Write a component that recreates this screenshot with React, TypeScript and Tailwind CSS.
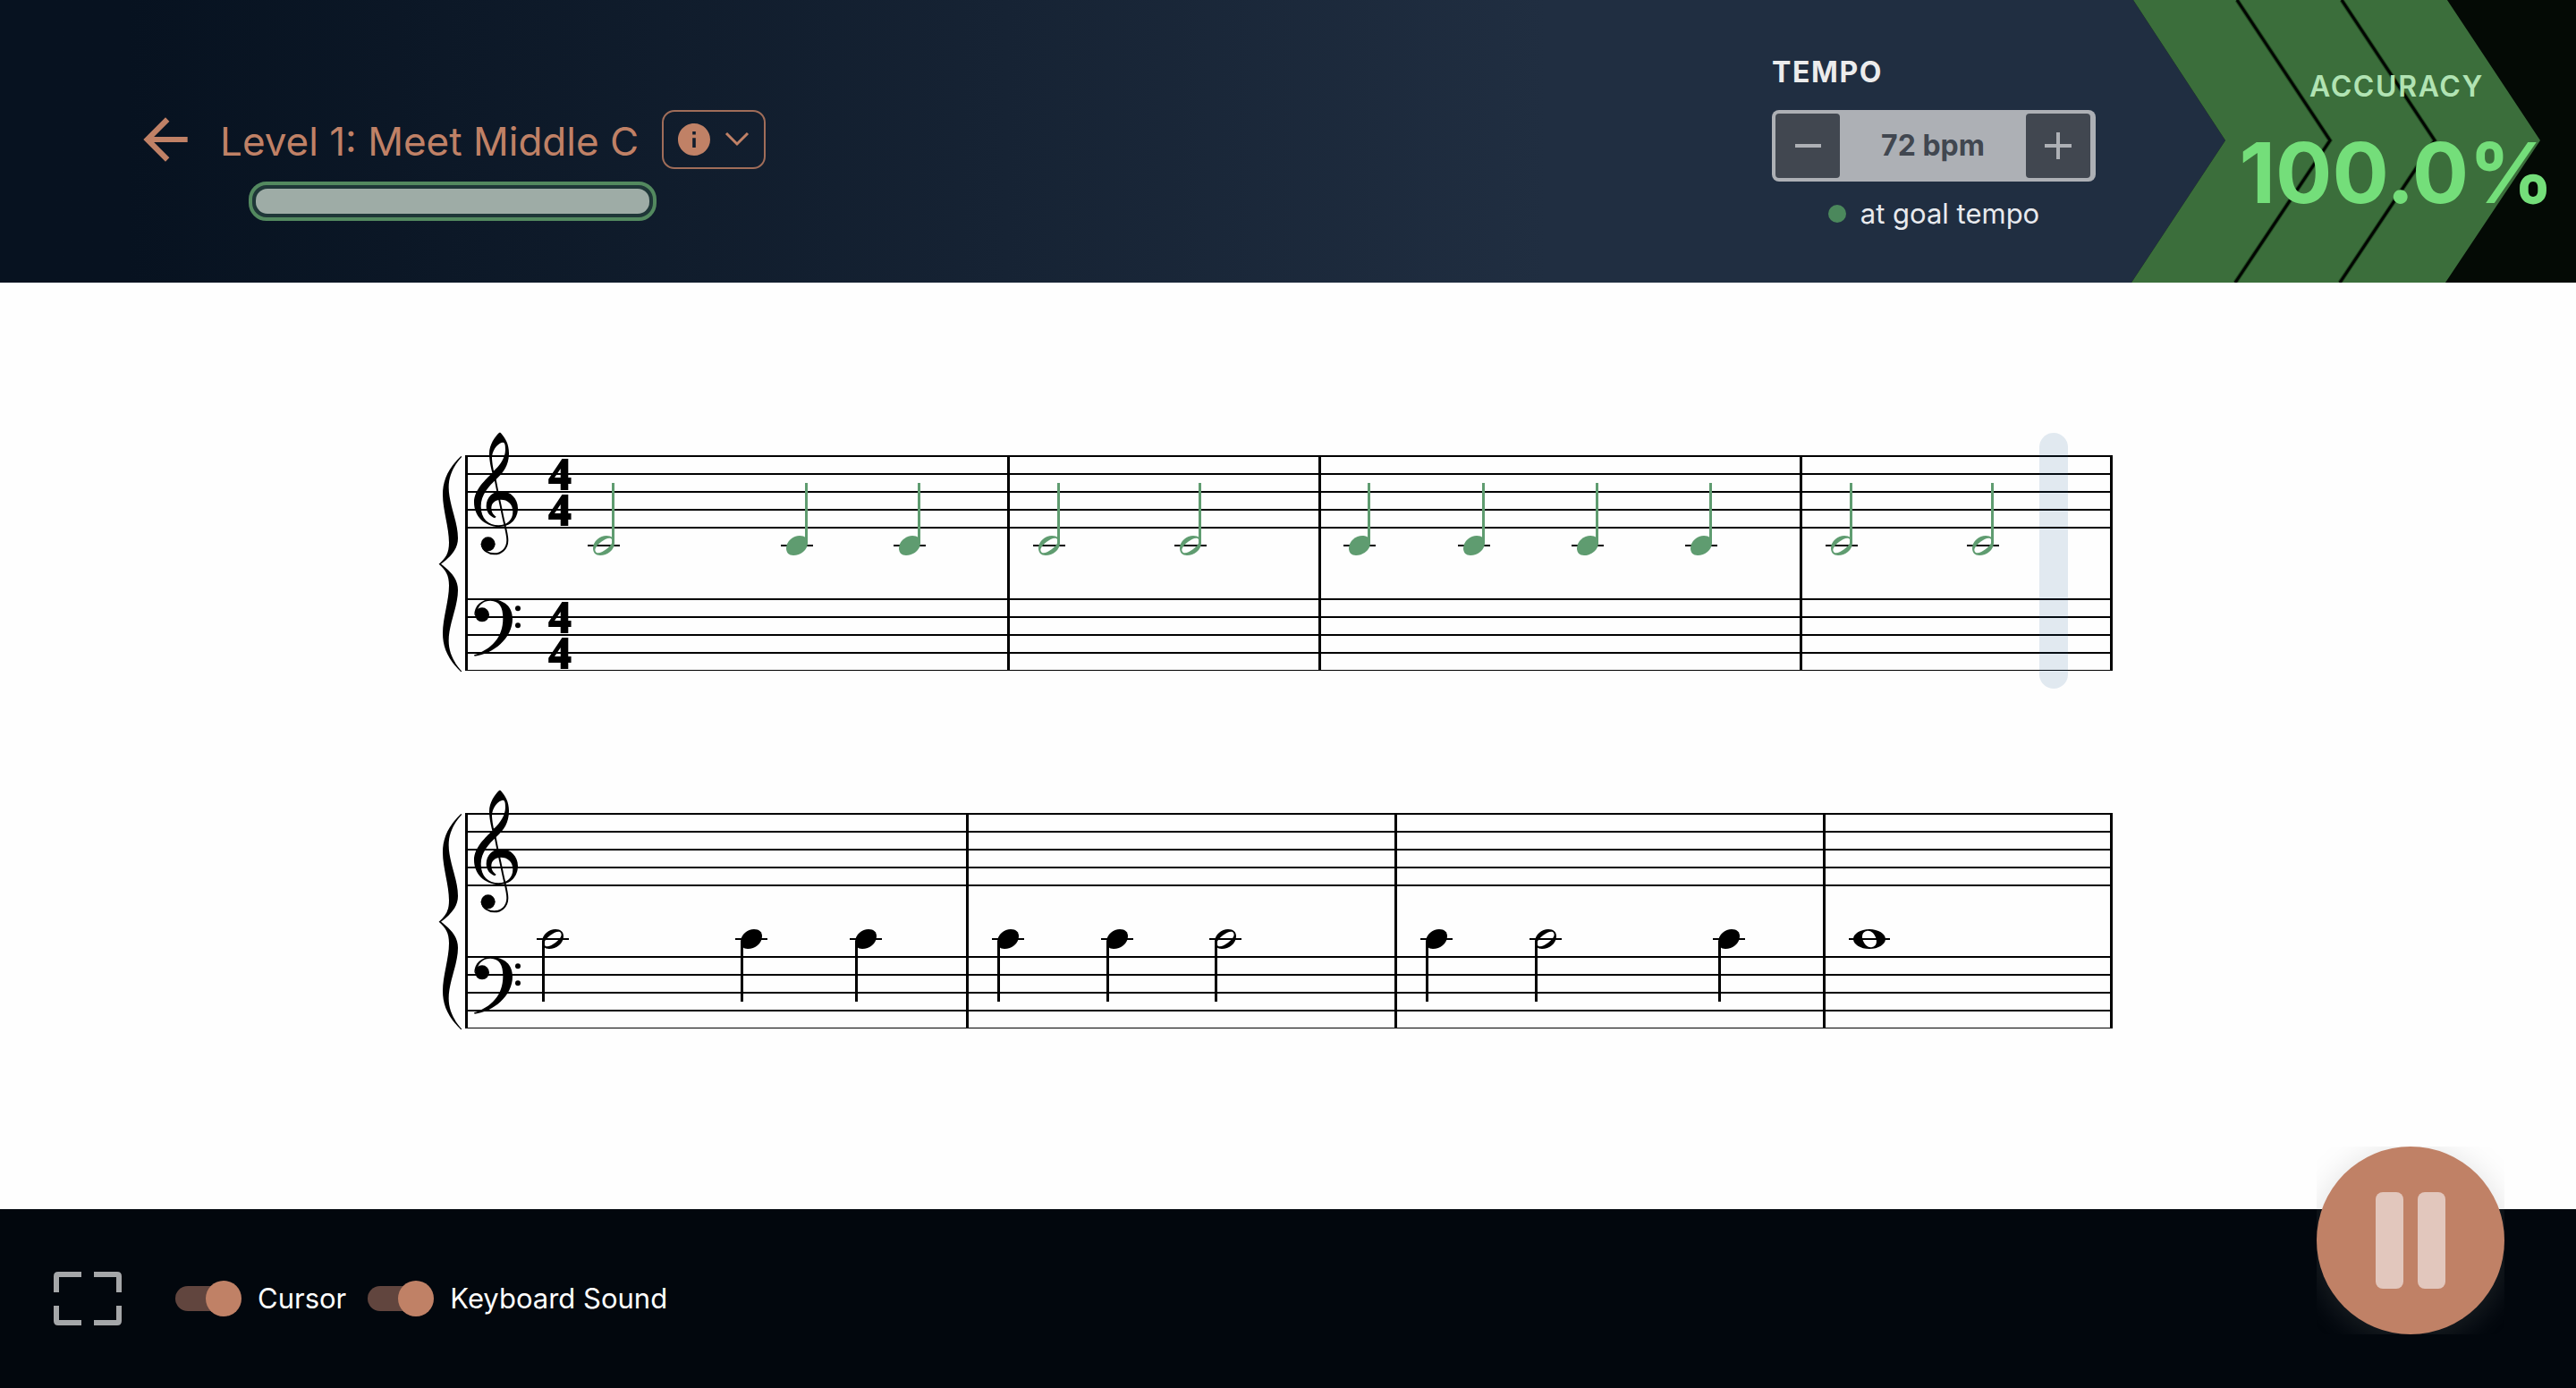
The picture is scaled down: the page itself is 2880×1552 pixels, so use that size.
import React, { useState } from "react";

type Note = { x: number; kind: "whole" | "half" | "quarter" };

type SystemProps = {
  label: string;
  bars: number[];
  notes: Note[];
  noteY: number;
  stem: "up" | "down";
  noteClass: string;
  time?: boolean;
};

const LINES = [40, 60, 80, 100, 120, 200, 220, 240, 260, 280];

function NoteHead({ kind }: { kind: Note["kind"] }) {
  if (kind === "whole") {
    return (
      <path
        fillRule="evenodd"
        d="M0 -11C10 -11 18 -6 18 0S10 11 0 11S-18 6 -18 0S-10 -11 0 -11ZM-3 -9C-8 -8 -9 -3 -7 2C-5 7 -1 10 3 9C8 8 9 3 7 -2C5 -7 1 -10 -3 -9Z"
      />
    );
  }
  if (kind === "half") {
    return (
      <path
        fillRule="evenodd"
        d="M3 -11C9 -11 12 -8 12 -3C12 5 4 11 -4 11C-9 11 -12 8 -12 3C-12 -5 -4 -11 3 -11ZM9 -7C7 -10 1 -7 -3 -4C-8 0 -11 4 -9 7C-7 10 -1 7 3 4C8 0 11 -4 9 -7Z"
      />
    );
  }
  return <path d="M3 -11C9 -11 12 -8 12 -3C12 5 4 11 -4 11C-9 11 -12 8 -12 3C-12 -5 -4 -11 3 -11Z" />;
}

function Brace() {
  const half =
    "M106 150C60 195 45 235 45 280C45 330 66 390 66 440C66 475 55 492 32 512L37 514C75 485 96 460 96 425C96 370 65 310 65 255C65 215 82 182 109 152Z";
  return (
    <g>
      <path d={half} />
      <path d={half} transform="translate(0 1024) scale(1 -1)" />
    </g>
  );
}

function TrebleClef() {
  return (
    <g>
      <path
        fillRule="evenodd"
        d="M233 73C220 86 201 112 201 142C201 165 207 190 211 206C190 228 150 262 150 305C150 350 184 386 234 387C272 388 297 360 297 325C297 292 272 268 241 268C212 268 191 290 191 318C191 338 203 352 220 358L224 353C212 345 208 335 208 324C208 308 221 296 240 296C262 296 280 310 280 336C280 365 260 382 232 382C198 382 173 360 173 318C173 280 200 250 224 228C250 204 267 180 267 140C267 110 255 90 240 73C238 71 235 71 233 73ZM247 104C232 104 209 130 210 158C211 172 213 185 216 200C238 180 255 155 255 128C255 115 254 104 247 104Z"
      />
      <path
        d="M216 200C226 260 238 310 246 350C252 380 262 410 262 432C262 462 240 478 218 478C198 478 178 466 176 446"
        fill="none"
        stroke="currentColor"
        strokeWidth="6"
      />
      <circle cx="197" cy="445" r="24" />
    </g>
  );
}

function BassClef() {
  return (
    <g>
      <path d="M151 684C150 652 175 630 208 630C252 632 279 655 279 696C279 760 215 814 152 821L150 817C208 798 247 758 247 695C247 655 235 636 205 635C182 635 165 650 163 666Z" />
      <circle cx="177" cy="682" r="24" />
      <circle cx="297" cy="661" r="9" />
      <circle cx="297" cy="718" r="9" />
    </g>
  );
}

function GrandStaff({ label, bars, notes, noteY, stem, noteClass, time }: SystemProps) {
  return (
    <svg
      role="img"
      aria-label={label}
      viewBox="0 0 1900 280"
      className="block h-auto w-full overflow-visible text-black"
      fill="currentColor"
    >
      {LINES.map((y) => (
        <rect key={y} x="30" y={y - 1} width="1842" height={y === 280 ? 1 : 2} />
      ))}
      {bars.map((x) => (
        <rect key={x} x={x - 1} y="39" width="3" height="241" />
      ))}
      <g transform="translate(-10 -10) scale(0.333333)">
        <Brace />
        <TrebleClef />
        <BassClef />
      </g>
      {time &&
        [77, 117, 237, 277].map((y) => (
          <text
            key={y}
            x="136"
            y={y}
            textAnchor="middle"
            stroke="currentColor"
            strokeWidth="2"
            className="font-['Liberation_Serif',serif] text-[50px] font-bold"
          >
            4
          </text>
        ))}
      {notes.map(({ x, kind }) => {
        const reach = kind === "whole" ? 23 : 18;
        return (
          <g key={x} transform={`translate(${x} ${noteY})`}>
            <rect x={-reach} y="-1" width={reach * 2} height="2" />
            <g className={noteClass}>
              <NoteHead kind={kind} />
              {kind !== "whole" &&
                (stem === "up" ? (
                  <rect x="9" y="-70" width="3" height="68" />
                ) : (
                  <rect x="-12" y="2" width="3" height="68" />
                ))}
            </g>
          </g>
        );
      })}
    </svg>
  );
}

const FIRST: Note[] = [
  { x: 185, kind: "half" },
  { x: 401, kind: "quarter" },
  { x: 527, kind: "quarter" },
  { x: 683, kind: "half" },
  { x: 841, kind: "half" },
  { x: 1030, kind: "quarter" },
  { x: 1158, kind: "quarter" },
  { x: 1285, kind: "quarter" },
  { x: 1412, kind: "quarter" },
  { x: 1569, kind: "half" },
  { x: 1727, kind: "half" },
];

const SECOND: Note[] = [
  { x: 128, kind: "half" },
  { x: 350, kind: "quarter" },
  { x: 478, kind: "quarter" },
  { x: 637, kind: "quarter" },
  { x: 759, kind: "quarter" },
  { x: 880, kind: "half" },
  { x: 1116, kind: "quarter" },
  { x: 1238, kind: "half" },
  { x: 1443, kind: "quarter" },
  { x: 1600, kind: "whole" },
];

function Toggle({ label }: { label: string }) {
  const [on, setOn] = useState(true);
  return (
    <label className="flex cursor-pointer items-center gap-4 text-[31px] leading-10 text-white">
      <input
        type="checkbox"
        role="switch"
        className="peer sr-only"
        checked={on}
        onChange={() => setOn(!on)}
      />
      <span className="flex h-7 w-[68px] items-center rounded-full bg-[#61453e] peer-checked:justify-end">
        <span className="-mr-1.5 size-10 shrink-0 rounded-full bg-[#c08166]" />
      </span>
      <span className="pl-2">{label}</span>
    </label>
  );
}

export default function App() {
  const [bpm, setBpm] = useState(72);
  return (
    <div className="flex min-h-screen flex-col bg-[#fefefe] font-['Inter',sans-serif]">
      <header className="flex h-[316px] items-stretch justify-between bg-linear-to-r from-[#071220] from-5% to-[#202e41] to-60%">
        <div className="pt-[119px] pl-[148px]">
          <div className="flex items-center text-[#c08166]">
            <button type="button" aria-label="Back">
              <svg viewBox="0 0 24 24" className="size-[74px]" fill="currentColor">
                <path d="M20 11H7.83l5.59-5.59L12 4l-8 8 8 8 1.41-1.41L7.83 13H20v-2z" />
              </svg>
            </button>
            <h1 className="ml-6 pt-1 text-[44px] leading-[60px] whitespace-nowrap">Level 1: Meet Middle C</h1>
            <button
              type="button"
              aria-label="Level information"
              className="ml-[26px] flex h-[66px] w-[116px] items-center justify-between rounded-[14px] border-2 border-[#a06d59] px-4"
            >
              <svg viewBox="2 2 20 20" className="size-9" fill="currentColor">
                <path d="M12 2C6.48 2 2 6.48 2 12s4.48 10 10 10 10-4.48 10-10S17.52 2 12 2zm1 15h-2v-6h2v6zm0-8h-2V7h2v2z" />
              </svg>
              <svg viewBox="0 0 28 18" className="h-[18px] w-7" fill="none" stroke="currentColor" strokeWidth="3">
                <path d="M2 2l12 12L26 2" />
              </svg>
            </button>
          </div>
          <div
            role="progressbar"
            aria-label="Level progress"
            aria-valuenow={100}
            className="mt-[10px] ml-[130px] h-11 w-[456px] rounded-[20px] border-4 border-[#53895f] bg-[#1f3738] p-1"
          >
            <div className="h-full w-full rounded-[13px] bg-[#9eaca6]" />
          </div>
        </div>

        <div className="flex">
          <section aria-label="Tempo" className="mr-10 w-[362px] pt-[61px]">
            <h2 className="text-[32px] leading-10 font-bold tracking-wider text-[#ececec]">TEMPO</h2>
            <div className="mt-[22px] flex h-20 items-center justify-between rounded-lg bg-[#adb0b5] py-1 pr-1.5 pl-1">
              <button
                type="button"
                aria-label="Slower"
                onClick={() => setBpm(bpm - 1)}
                className="flex size-[72px] items-center justify-center rounded bg-[#414750]"
              >
                <span className="h-1 w-[29px] bg-[#adb0b5]" />
              </button>
              <span className="text-[32px] leading-10 font-bold text-[#414750]">{bpm} bpm</span>
              <button
                type="button"
                aria-label="Faster"
                onClick={() => setBpm(bpm + 1)}
                className="flex size-[72px] items-center justify-center rounded bg-[#414750] text-[#adb0b5]"
              >
                <svg viewBox="0 0 30 30" className="size-[30px]" stroke="currentColor" strokeWidth="4">
                  <path d="M0 15H30M15 0V30" />
                </svg>
              </button>
            </div>
            <p className="mt-4 flex items-center justify-center gap-4 text-[31px] leading-10 text-[#e8eaee]">
              <span className="size-5 rounded-full bg-[#4b885c]" />
              at goal tempo
            </p>
          </section>

          <section aria-label="Accuracy" className="relative w-[497px]">
            <svg
              aria-hidden="true"
              viewBox="0 0 497 316"
              preserveAspectRatio="none"
              className="absolute inset-0 size-full"
            >
              <path d="M2 0H497V316H0L105 157Z" fill="#040a05" />
              <path d="M2 0H353L457 157L351 316H0L105 157Z" fill="#3b6e3b" />
              <g fill="none" stroke="#234a22" strokeWidth="5">
                <path d="M118 0L222 157L116 316M235 0L339 157L233 316" />
              </g>
              <g fill="none" stroke="#020602" strokeWidth="3">
                <path d="M118 0L222 157L116 316M235 0L339 157L233 316" />
              </g>
            </svg>
            <div className="relative flex flex-col items-center pt-[77px] pl-24">
              <h2 className="text-[32px] leading-10 font-semibold tracking-wider text-[#b1e3b3]">ACCURACY</h2>
              <p className="mt-7 text-[94px] leading-[96px] font-bold text-[#74de7a]">100.0%</p>
            </div>
          </section>
        </div>
      </header>

      <main className="flex-1 px-[490px] pt-[154px]">
        <div className="flex flex-col gap-[120px]">
          <div className="relative">
            <GrandStaff
              label="Measures 1 to 4"
              bars={[31, 637, 985, 1523, 1870]}
              notes={FIRST}
              noteY={140}
              stem="up"
              noteClass="text-[#5f9c70] fill-[#5f9c70]"
              time
            />
            <div className="absolute top-[14px] right-[78px] h-[286px] w-8 rounded-full bg-[#205e93]/13" />
          </div>
          <GrandStaff
            label="Measures 5 to 8"
            bars={[31, 591, 1070, 1549, 1870]}
            notes={SECOND}
            noteY={180}
            stem="down"
            noteClass="fill-black"
          />
        </div>
      </main>

      <footer className="relative flex h-[200px] items-center bg-[#02070d] px-[60px]">
        <button type="button" aria-label="Full screen">
          <svg viewBox="0 0 76 60" className="h-[60px] w-[76px]" fill="none" stroke="#a5a7a9" strokeWidth="6">
            <path d="M3 23V5Q3 3 5 3H31M45 3H71Q73 3 73 5V23M73 38V55Q73 57 71 57H45M31 57H5Q3 57 3 55V38" />
          </svg>
        </button>
        <div className="ml-[60px] flex gap-6">
          <Toggle label="Cursor" />
          <Toggle label="Keyboard Sound" />
        </div>
        <button
          type="button"
          aria-label="Pause"
          className="absolute -top-[70px] right-20 size-[210px] overflow-hidden"
        >
          <span className="flex size-full items-center justify-center gap-4 rounded-full bg-[#c08166] shadow-[0_4px_30px_6px_rgba(130,130,130,0.18)]">
            <span className="h-[108px] w-[31px] rounded-lg bg-[#e2c7bd]" />
            <span className="h-[108px] w-[31px] rounded-lg bg-[#e2c7bd]" />
          </span>
        </button>
      </footer>
    </div>
  );
}
